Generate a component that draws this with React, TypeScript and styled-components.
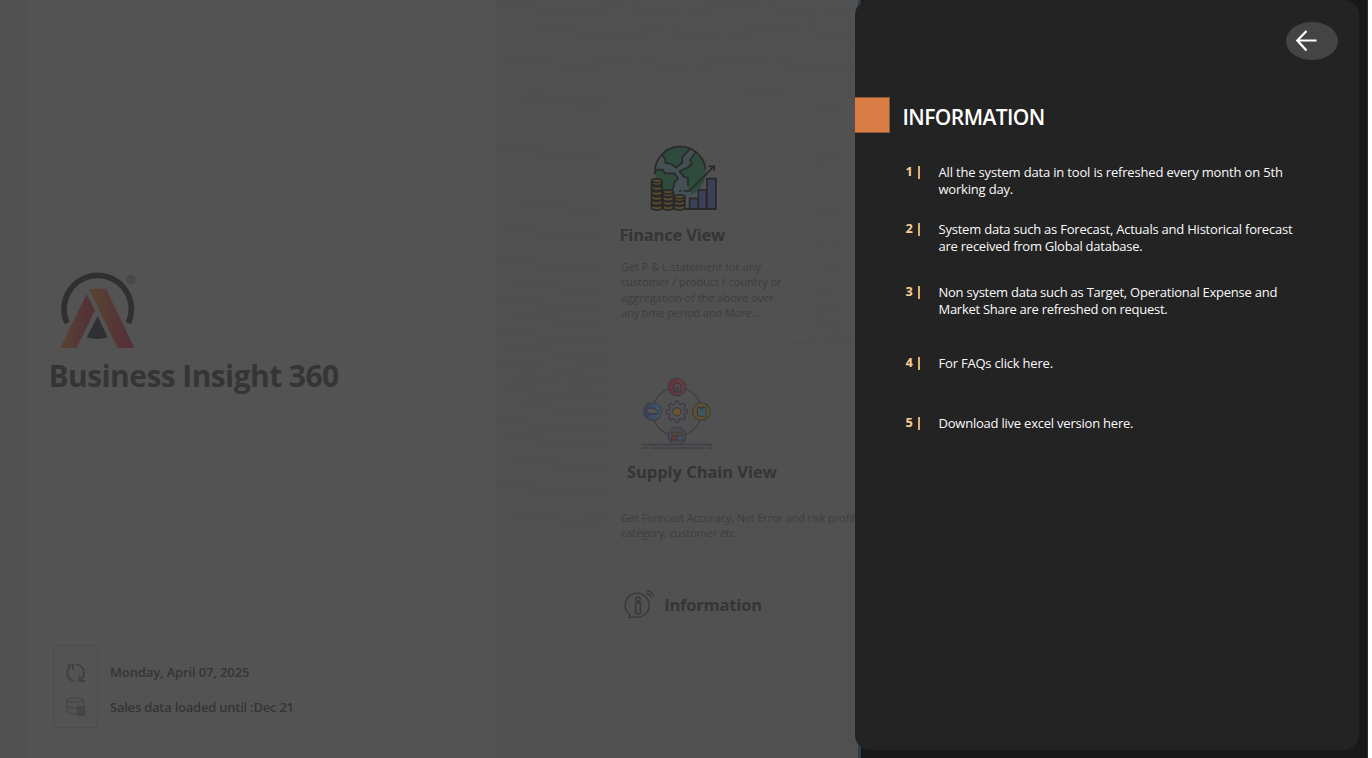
import React from "react";
import styled, { createGlobalStyle } from "styled-components";

const Global = createGlobalStyle`
  * { box-sizing: border-box; }
  body { margin: 0; background: #ffffff; font-family: "Open Sans", "Noto Sans", sans-serif; }
  svg { display: block; flex: none; }
`;

const Page = styled.div`
  position: relative;
  display: flex;
  width: 1372px;
  height: 758px;
  overflow: hidden;
`;
const Gutter = styled.div`
  flex: none;
  width: 27px;
  background: #505050;
`;
const Sidebar = styled.aside`
  flex: none;
  display: flex;
  flex-direction: column;
  width: 469px;
  padding: 271px 0 30px;
  background: #535353;
`;
const Canvas = styled.main`
  position: relative;
  flex: none;
  width: 362px;
  padding: 99px 0 0 108px;
  overflow: hidden;
  background: #505050;
`;
const Backdrop = styled.div`
  flex: none;
  width: 510px;
  border-left: 3px solid #2c3d4c;
  border-right: 1px solid #232d36;
  background: #191919;
`;

const Texture = styled.svg`
  position: absolute;
  inset: 0;
`;

const Text = styled.div<{ $size: number; $line: number; $weight?: number; $track?: number; $color?: string }>`
  margin: 0;
  font-size: ${(p) => p.$size}px;
  line-height: ${(p) => p.$line}px;
  font-weight: ${(p) => p.$weight ?? 400};
  letter-spacing: ${(p) => p.$track ?? 0}px;
  color: ${(p) => p.$color ?? "#353535"};
  white-space: nowrap;
`;

const LogoSlot = styled.div`
  padding-left: 31px;
`;
const BrandName = styled.div`
  padding: 6px 0 0 21.5px;
`;
const Status = styled.footer`
  display: flex;
  gap: 12px;
  margin: auto 0 0 26px;
`;
const StatusIcons = styled.div`
  display: flex;
  flex-direction: column;
  gap: 14px;
  width: 45px;
  height: 83px;
  padding: 17px 0 0 12px;
  border: 1px solid #4c4c4c;
  border-radius: 4px;
`;
const StatusLines = styled.div`
  display: flex;
  flex-direction: column;
  gap: 15px;
  padding-top: 17px;
`;

const CardRow = styled.div`
  position: relative;
  display: flex;
  gap: 30px;
  height: 240px;
`;
const Card = styled.section<{ $w: number; $h: number }>`
  position: relative;
  flex: none;
  width: ${(p) => p.$w}px;
  height: ${(p) => p.$h}px;
  border-radius: 7px;
  background: #515151;
`;
const FinanceCard = styled(Card)`
  padding-top: 46px;
`;
const SupplyCard = styled(Card)`
  margin: 5px 0 0 6px;
  padding-top: 33px;
`;
const InfoButton = styled(Card)`
  display: flex;
  gap: 9px;
  margin-top: 19px;
  padding: 11px 0 0 19.5px;
`;
const Inset = styled.div<{ $left: number; $top?: number }>`
  padding: ${(p) => p.$top ?? 0}px 0 0 ${(p) => p.$left}px;
`;

const Drawer = styled.div`
  position: absolute;
  left: 855px;
  top: 0;
  display: flex;
  flex-direction: column;
  width: 504px;
  height: 750px;
  border-radius: 15px;
  background: #232323;
`;
const BackButton = styled.button`
  align-self: flex-end;
  flex: none;
  width: 52px;
  height: 38.5px;
  margin: 21.5px 21px 0 0;
  padding: 0 0 0 10px;
  border: 0;
  border-radius: 50%;
  background: #444444;
`;
const DrawerHeader = styled.header`
  display: flex;
  gap: 12.5px;
  margin-top: 37px;
`;
const Marker = styled.div`
  width: 35px;
  height: 36px;
  border: 1px solid #8a5a3b;
  border-left: 0;
  background: #d87c43;
`;
const HeaderText = styled.div`
  padding-top: 5px;
`;
const Notes = styled.div`
  display: flex;
  flex-direction: column;
  margin: 31px 0 0 50.5px;
`;
const Note = styled.div<{ $gap: number }>`
  display: flex;
  margin-bottom: ${(p) => p.$gap}px;
`;
const NoteIndex = styled.div`
  display: flex;
  flex: none;
  gap: 5px;
  width: 33px;
  margin-top: -1px;
  font-size: 12.8px;
  line-height: 17.4px;
  font-weight: 700;
  color: #f8cf94;
`;
const Bar = styled.span`
  width: 2px;
  height: 13px;
  margin-top: 3px;
  background: #dcb176;
`;

const Logo = () => (
  <svg width="80" height="79" viewBox="84 45 240 237">
    <defs>
      <linearGradient id="legLeft" x1="0" x2="1">
        <stop offset="0.1" stopColor="#574233" />
        <stop offset="0.75" stopColor="#543237" />
      </linearGradient>
      <linearGradient id="legRight" x1="0" x2="1">
        <stop offset="0.1" stopColor="#574232" />
        <stop offset="0.8" stopColor="#543237" />
      </linearGradient>
    </defs>
    <path d="M111 201A101 101 0 1 1 295 201" fill="none" stroke="#303032" strokeWidth="17" />
    <path d="M170 114L195 163L140 276H90Z" fill="url(#legLeft)" />
    <path d="M177 98H228L313 276H263Z" fill="url(#legRight)" />
    <path d="M203 180L233 244Q202 254 170 244Z" fill="#303032" />
    <circle cx="303" cy="71" r="11.5" fill="none" stroke="#3a3a3a" strokeWidth="2.5" />
    <path d="M299 77V65H304A3.3 3.3 0 0 1 304 71.500H299M303 71.500L308 77" fill="none" stroke="#3a3a3a" strokeWidth="2.200" />
  </svg>
);

const RefreshIcon = () => (
  <svg width="20" height="20" viewBox="108 102 60 60" fill="none" stroke="#404040" strokeWidth="5.5">
    <path d="M133 156A25 25 0 0 1 122 111" />
    <path d="M112 107H129V123" />
    <path d="M137 107A25 25 0 0 1 153 151" />
    <path d="M165 156H149V140" />
  </svg>
);

const DatabaseIcon = () => (
  <svg width="20" height="20" viewBox="109 202 60 60" fill="none" stroke="#434343" strokeWidth="3">
    <ellipse cx="137" cy="211" rx="25" ry="6.500" />
    <path d="M112 211V246Q116 253 138 254M112 228Q116 235 138 235M162 211V226" />
    <rect x="141" y="230" width="26" height="29" fill="#434343" stroke="none" />
    <path d="M144 239H164M144 248H164M150 234V256M158 234V256" stroke="#505050" strokeWidth="1.500" />
  </svg>
);

const Coin = ({ x, y, w }: { x: number; y: number; w: number }) => (
  <path d={`M${x} ${y}V${y + 11}Q${x + w / 2} ${y + 19} ${x + w} ${y + 11}V${y}Q${x + w / 2} ${y + 8} ${x} ${y}`} fill="#594c2f" />
);

const coinStacks = [
  { x: 51, ys: [137, 152, 167, 182, 196, 210] },
  { x: 85, ys: [171, 184, 197, 210] },
  { x: 119, ys: [185, 197, 210] },
];

const FinanceIcon = () => (
  <svg width="68.3" height="66.7" viewBox="46 30 205 200" fill="none" stroke="#292929" strokeWidth="5">
    <defs>
      <clipPath id="globe">
        <circle cx="138" cy="112" r="75" />
      </clipPath>
    </defs>
    <g clipPath="url(#globe)">
      <rect x="60" y="30" width="156" height="160" fill="#445053" stroke="none" />
      <path d="M82 62L92 72V84L110 87L125 98L143 82V66L170 38L120 20Z" fill="#2e4b3d" />
      <path d="M55 104L84 104L92 115H119L130 130L118 143V154L90 205L50 170Z" fill="#2e4b3d" />
      <path d="M184 50L166 75L172 86L158 98L135 108L146 124L160 129V165L180 185L230 150V80Z" fill="#2e4b3d" stroke="none" />
      <path d="M184 50L166 75L172 86L158 98L135 108L146 124L160 129V152" />
    </g>
    <path d="M61 118A76 76 0 1 1 213 104" />
    <path d="M133 168H140M147 168H165L237 95M222 94H239V108" />
    <g fill="#394058">
      <path d="M165 190H191V222H165ZM191 165H215V222H191ZM217 131H244V222H217Z" />
    </g>
    <path d="M150 222H244" />
    {coinStacks.map((s) => (
      <g key={s.x}>
        <path d={`M${s.x} ${s.ys[0]}V219Q${s.x + 15} 229 ${s.x + 31} 219V${s.ys[0]}`} fill="#594c2f" />
        {s.ys.map((y) => (
          <Coin key={y} x={s.x} y={y} w={31} />
        ))}
        <ellipse cx={s.x + 15.500} cy={s.ys[0]} rx="15.500" ry="5.500" fill="#594c2f" />
      </g>
    ))}
  </svg>
);

const gearPoints = Array.from({ length: 8 }, (_, i) =>
  [[-14, 24], [-8, 32], [8, 32], [14, 24]].map(([deg, r]) => {
    const a = ((i * 45 + deg) * Math.PI) / 180;
    return `${(260 + r * Math.sin(a)).toFixed(1)},${(246 - r * Math.cos(a)).toFixed(1)}`;
  }).join(" ")
).join(" ");

const SupplyIcon = () => (
  <svg width="72.7" height="72.7" viewBox="152 142 218 218" fill="none" stroke="#3a3944" strokeWidth="3">
    <defs>
      <linearGradient id="store" x1="0" x2="1">
        <stop offset="0" stopColor="#653240" />
        <stop offset="1" stopColor="#61413d" />
      </linearGradient>
      <linearGradient id="truck" x1="0" x2="1">
        <stop offset="0" stopColor="#3b405d" />
        <stop offset="1" stopColor="#3d5c66" />
      </linearGradient>
    </defs>
    <circle cx="260" cy="246" r="73" />
    <circle cx="260" cy="172" r="26.500" fill="url(#store)" />
    <circle cx="187" cy="246" r="26.500" fill="url(#truck)" />
    <circle cx="333" cy="246" r="26.500" fill="#60522e" />
    <circle cx="260" cy="319" r="26.500" fill="#4b4b4f" />
    <path d="M250 187V168Q251 161 260 161T271 168V187ZM256 187V176H264V187" fill="#55464a" />
    <path d="M170 236H191L197 242L205 245V252H170Z" fill="#545454" />
    <path d="M174 252H180M193 252H199" strokeWidth="5" />
    <rect x="321" y="233" width="26" height="27" rx="3" fill="#3f575d" />
    <path d="M328 234Q333 240 339 234" />
    <polygon points={gearPoints} fill="#515153" />
    <circle cx="260" cy="246" r="12" fill="#685631" />
    <circle cx="251" cy="313" r="6" fill="#66522f" />
    <circle cx="269" cy="313" r="6" fill="#66522f" />
    <path d="M243 331V323Q244 319 251 319T260 323V331Z" fill="#6a3b3c" />
    <path d="M260 331V323Q262 319 269 319T278 323V331Z" fill="#3f5961" />
    <path d="M155 345H366" strokeWidth="5" stroke="#414147" />
    <path d="M155 355H173M180 355H341M348 355H366" />
  </svg>
);

const InfoIcon = () => (
  <svg width="31.7" height="30" viewBox="100 88 95 90" fill="none" stroke="#373737" strokeWidth="4">
    <path d="M117 165A36 36 0 1 1 128 171Q121 174 115 173Q119 169 117 165" />
    <circle cx="142" cy="118" r="6.500" />
    <rect x="135" y="129" width="14" height="34" rx="2" />
    <path d="M168 93Q186 94 188 113M168 101Q178 102 180 112" />
  </svg>
);

const BackArrow = () => (
  <svg width="22" height="22" viewBox="0 0 22 22" fill="none" stroke="#ffffff" strokeWidth="2.2">
    <path d="M20.500 10.500H1.500M10.500 1L1.300 10.500L10.500 20.500" />
  </svg>
);

const waves = [
  [6, 0], [30, 40], [60, 10], [98, 25], [150, 5], [205, 30], [232, 8], [262, 0], [284, 15], [302, 4], [318, 22],
  [334, 0], [349, 14], [363, 2], [378, 18], [392, 6], [408, 24], [424, 0], [440, 12], [462, 20], [488, 5], [515, 15],
];

const WaveTexture = () => (
  <Texture width="362" height="758" viewBox="0 0 362 758" fill="none" stroke="#4f4f4f" strokeWidth="1">
    {waves.map(([y, x]) => (
      <path key={y} d={`M${x} ${y}q18 -5 36 1t34 5t40 -4t44 3t60 -4t70 3t90 -4`} strokeDasharray="46 9 70 14" />
    ))}
  </Texture>
);

const financeCopy: [string, number][] = [
  ["Get P & L statement for any", -0.046],
  ["customer / product / country or", -0.048],
  ["aggregation of the above over", -0.014],
  ["any time period and More...", -0.109],
];
const supplyCopy = ["Get Forecast Accuracy, Net Error and risk profil", "category, customer etc."];

const notes: { gap: number; lines: [string, number][] }[] = [
  { gap: 22.2, lines: [["All the system data in tool is refreshed every month on 5th", -0.17], ["working day.", -0.2]] },
  { gap: 28.2, lines: [["System data such as Forecast, Actuals and Historical forecast", -0.22], ["are received from Global database.", -0.24]] },
  { gap: 36.2, lines: [["Non system data such as Target, Operational Expense and", -0.25], ["Market Share are refreshed on request.", -0.28]] },
  { gap: 42.6, lines: [["For FAQs click here.", -0.2]] },
  { gap: 0, lines: [["Download live excel version here.", -0.22]] },
];

export default function App() {
  return (
    <Page>
      <Global />
      <Gutter />
      <Sidebar>
        <LogoSlot>
          <Logo />
        </LogoSlot>
        <BrandName>
          <Text $size={30} $line={40} $weight={700} $track={-0.58}>Business Insight 360</Text>
        </BrandName>
        <Status>
          <StatusIcons>
            <RefreshIcon />
            <DatabaseIcon />
          </StatusIcons>
          <StatusLines>
            <Text $size={13} $line={20} $weight={600} $track={-0.13}>Monday, April 07, 2025</Text>
            <Text $size={13} $line={20} $weight={600} $track={-0.23}>Sales data loaded until :Dec 21</Text>
          </StatusLines>
        </Status>
      </Sidebar>
      <Canvas>
        <WaveTexture />
        <CardRow>
          <FinanceCard $w={208} $h={240}>
            <Inset $left={46}>
              <FinanceIcon />
            </Inset>
            <Inset $left={15.5} $top={12.5}>
              <Text $size={16.5} $line={22} $weight={700} $track={-0.2}>Finance View</Text>
            </Inset>
            <Inset $left={17} $top={12.5}>
              {financeCopy.map(([line, track]) => (
                <Text key={line} $size={11} $line={15.4} $track={track} $color="#3e3e3e">{line}</Text>
              ))}
            </Inset>
          </FinanceCard>
          <Card $w={208} $h={240} />
        </CardRow>
        <SupplyCard $w={420} $h={215}>
          <Inset $left={31}>
            <SupplyIcon />
          </Inset>
          <Inset $left={17} $top={10.9}>
            <Text $size={16.5} $line={22} $weight={700} $track={-0.05}>Supply Chain View</Text>
          </Inset>
          <Inset $left={11} $top={27.4}>
            {supplyCopy.map((line) => (
              <Text key={line} $size={11} $line={15.4} $track={-0.13} $color="#3e3e3e">{line}</Text>
            ))}
          </Inset>
        </SupplyCard>
        <InfoButton $w={190} $h={51}>
          <InfoIcon />
          <Inset $left={0} $top={4.6}>
            <Text $size={16.5} $line={22} $weight={700} $track={-0.2}>Information</Text>
          </Inset>
        </InfoButton>
      </Canvas>
      <Backdrop />
      <Drawer>
        <BackButton aria-label="Back">
          <BackArrow />
        </BackButton>
        <DrawerHeader>
          <Marker />
          <HeaderText>
            <Text as="h1" $size={21} $line={30} $weight={600} $track={-0.57} $color="#ffffff">INFORMATION</Text>
          </HeaderText>
        </DrawerHeader>
        <Notes>
          {notes.map((note, i) => (
            <Note key={i} $gap={note.gap}>
              <NoteIndex>
                {i + 1}
                <Bar />
              </NoteIndex>
              <div>
                {note.lines.map(([line, track]) => (
                  <Text key={line} $size={13} $line={17.4} $track={track} $color="#fafafa">{line}</Text>
                ))}
              </div>
            </Note>
          ))}
        </Notes>
      </Drawer>
    </Page>
  );
}
